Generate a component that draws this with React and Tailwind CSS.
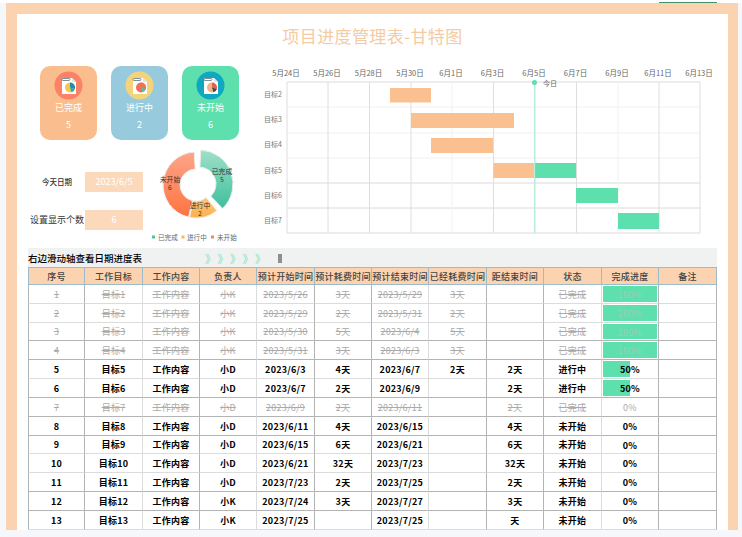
const font = "font-['Noto_Sans_CJK_SC','Liberation_Sans',sans-serif]";

// 表格数据
const rows = [
  ["1", "目标1", "工作内容", "小K", "2023/5/26", "3天", "2023/5/29", "3天", "", "已完成", 100, "done"],
  ["2", "目标2", "工作内容", "小K", "2023/5/29", "2天", "2023/5/31", "2天", "", "已完成", 100, "done"],
  ["3", "目标3", "工作内容", "小K", "2023/5/30", "5天", "2023/6/4", "5天", "", "已完成", 100, "done"],
  ["4", "目标4", "工作内容", "小K", "2023/5/31", "3天", "2023/6/3", "3天", "", "已完成", 100, "done"],
  ["5", "目标5", "工作内容", "小D", "2023/6/3", "4天", "2023/6/7", "2天", "2天", "进行中", 50, "live"],
  ["6", "目标6", "工作内容", "小D", "2023/6/7", "2天", "2023/6/9", "", "2天", "进行中", 50, "live"],
  ["7", "目标7", "工作内容", "小D", "2023/6/9", "2天", "2023/6/11", "", "2天", "已完成", 0, "done"],
  ["8", "目标8", "工作内容", "小D", "2023/6/11", "4天", "2023/6/15", "", "4天", "未开始", 0, "live"],
  ["9", "目标9", "工作内容", "小D", "2023/6/15", "6天", "2023/6/21", "", "6天", "未开始", 0, "live"],
  ["10", "目标10", "工作内容", "小D", "2023/6/21", "32天", "2023/7/23", "", "32天", "未开始", 0, "live"],
  ["11", "目标11", "工作内容", "小D", "2023/7/23", "2天", "2023/7/25", "", "2天", "未开始", 0, "live"],
  ["12", "目标12", "工作内容", "小K", "2023/7/24", "3天", "2023/7/27", "", "3天", "未开始", 0, "live"],
  ["13", "目标13", "工作内容", "小K", "2023/7/25", "", "2023/7/25", "", "天", "未开始", 0, "live"],
];

const headers = ["序号", "工作目标", "工作内容", "负责人", "预计开始时间", "预计耗费时间", "预计结束时间", "已经耗费时间", "距结束时间", "状态", "完成进度", "备注"];
const colWidths = ["w-[57px]", "w-[58px]", "w-[57px]", "w-[57px]", "w-[58px]", "w-[57px]", "w-[57px]", "w-[58px]", "w-[57px]", "w-[58px]", "w-[57px]", "w-[58px]"];

// 竖线和横线深浅不一
const colLine = ["border-r-[#b4b4b4]", "border-r-[#dcdcdc]", "border-r-[#b4b4b4]", "border-r-[#dcdcdc]", "border-r-[#b4b4b4]", "border-r-[#b4b4b4]", "border-r-[#dcdcdc]", "border-r-[#b4b4b4]", "border-r-[#b4b4b4]", "border-r-[#dcdcdc]", "border-r-[#b4b4b4]", "border-r-[#b4b4b4]"];
const rowLine = ["border-b-[#dcdcdc]", "border-b-[#dcdcdc]", "border-b-[#b4b4b4]", "border-b-[#b4b4b4]", "border-b-[#dcdcdc]", "border-b-[#b4b4b4]", "border-b-[#b4b4b4]", "border-b-[#b4b4b4]", "border-b-[#dcdcdc]", "border-b-[#dcdcdc]", "border-b-[#b4b4b4]", "border-b-[#b4b4b4]", "border-b-[#dcdcdc]"];
const rowHeight = ["h-[19px]", "h-[19px]", "h-[18px]", "h-[19px]", "h-[19px]", "h-[19px]", "h-[19px]", "h-[19px]", "h-[18px]", "h-[19px]", "h-[19px]", "h-[19px]", "h-[19px]"];

const ticks = ["5月24日", "5月26日", "5月28日", "5月30日", "6月1日", "6月3日", "6月5日", "6月7日", "6月9日", "6月11日", "6月13日"];
const tickX = [287, 328, 369.5, 411, 452, 493.5, 535, 576.5, 618, 659, 700];
const laneY = [82, 107, 133, 158, 183, 208, 233];
const laneNames = ["目标2", "目标3", "目标4", "目标5", "目标6", "目标7"];
const bars = [
  [390, 88, 41, 14.5, "#fbc08f"],
  [411, 113, 103, 15, "#fbc08f"],
  [431, 138, 62, 15, "#fbc08f"],
  [493.5, 163, 41, 15, "#fbc08f"],
  [534.5, 163, 41.5, 15, "#5ddfae"],
  [576, 188, 42, 15, "#5ddfae"],
  [618, 213, 41, 16, "#5ddfae"],
];

function GanttChart() {
  return (
    <svg className="w-[450px] h-[190px] shrink-0" viewBox="262 58 450 190">
      {laneY.map((y, i) => (
        <line key={y} x1="287" x2="700" y1={y} y2={y} stroke={i >= 4 || i === 0 ? "#dadada" : "#f0f0f0"} strokeWidth="1" />
      ))}
      {tickX.map((x, i) => (
        <line key={x} x1={x} x2={x} y1="82" y2="233" stroke={i === 4 || i === 8 ? "#f2f2f2" : "#dedede"} strokeWidth="1" />
      ))}
      {ticks.map((t, i) => (
        <text key={t} x={tickX[i] - 1} y="76" textAnchor="middle" fontSize="7.5" fill="#666" fontFamily="Noto Sans CJK SC">{t}</text>
      ))}
      {laneNames.map((n, i) => (
        <text key={n} x="282" y={97 + i * 25.2} textAnchor="end" fontSize="7" fill="#777" fontFamily="Noto Sans CJK SC">{n}</text>
      ))}
      {bars.map((b, i) => (
        <rect key={i} x={b[0]} y={b[1]} width={b[2]} height={b[3]} fill={b[4]} />
      ))}
      <line x1="534.5" x2="534.5" y1="82" y2="233" stroke="#bdeedb" strokeWidth="1.2" />
      <circle cx="534.5" cy="82.5" r="2.5" fill="#5ddfae" />
      <text x="543" y="85.5" fontSize="7" fill="#666" fontFamily="Noto Sans CJK SC">今日</text>
    </svg>
  );
}

// 圆环扇区路径
function slice(cx, cy, R, r, a0, a1) {
  const p = (rad, a) => {
    const t = ((a - 90) * Math.PI) / 180;
    return `${(cx + rad * Math.cos(t)).toFixed(2)} ${(cy + rad * Math.sin(t)).toFixed(2)}`;
  };
  const big = a1 - a0 > 180 ? 1 : 0;
  return `M${p(R, a0)} A${R} ${R} 0 ${big} 1 ${p(R, a1)} L${p(r, a1)} A${r} ${r} 0 ${big} 0 ${p(r, a0)} Z`;
}

function DonutChart() {
  return (
    <svg className="w-[92px] h-[100px] shrink-0" viewBox="150 148 92 100">
      <defs>
        <linearGradient id="g1" x1="0" x2="0" y1="0" y2="1">
          <stop offset="0" stopColor="#9fe0c9" />
          <stop offset="1" stopColor="#3fbf9d" />
        </linearGradient>
        <linearGradient id="g2" x1="0" x2="0" y1="0" y2="1">
          <stop offset="0" stopColor="#fbc777" />
          <stop offset="1" stopColor="#fbb04f" />
        </linearGradient>
        <linearGradient id="g3" x1="0" x2="0" y1="0" y2="1">
          <stop offset="0" stopColor="#fda58a" />
          <stop offset="1" stopColor="#fd7440" />
        </linearGradient>
      </defs>
      <path d={slice(199, 184, 34, 17, 3, 136)} fill="url(#g1)" stroke="#e9eeec" strokeWidth="1" />
      <path d={slice(196, 185, 33, 16, 141, 191)} fill="url(#g2)" stroke="#eeeeee" strokeWidth="1" />
      <path d={slice(196, 185, 33, 16, 193, 357)} fill="url(#g3)" stroke="#eeeeee" strokeWidth="1" />
      <g fontSize="6.8" fill="#333" textAnchor="middle" fontFamily="Noto Sans CJK SC">
        <text x="222" y="173.5">已完成</text>
        <text x="222" y="182">5</text>
        <text x="200" y="207.5">进行中</text>
        <text x="200" y="216">2</text>
        <text x="170" y="181.5">未开始</text>
        <text x="170" y="190">6</text>
      </g>
      <g fontSize="6.6" fill="#666" fontFamily="Noto Sans CJK SC">
        <rect x="152" y="235.5" width="3" height="3" fill="#4fc3a1" />
        <text x="158" y="240">已完成</text>
        <rect x="181.5" y="235.5" width="3" height="3" fill="#fbb861" />
        <text x="187" y="240">进行中</text>
        <rect x="211" y="235.5" width="3" height="3" fill="#f08a5d" />
        <text x="217" y="240">未开始</text>
      </g>
    </svg>
  );
}

function DocIcon({ bg, a, b, c }) {
  return (
    <svg className="w-[29px] h-[29px]" viewBox="0 0 29 29">
      <circle cx="14.5" cy="14.5" r="14" fill={bg} />
      <path d="M8 7h10l4 4v12H8z" fill="#fff" />
      <path d="M18 7v4h4z" fill="#dfe6ea" />
      <rect x="8" y="7.5" width="8" height="2" rx="1" fill="none" stroke="#5d7480" strokeWidth="0.8" />
      <circle cx="16" cy="16.5" r="5" fill={a} />
      <path d="M16 16.5V11.5a5 5 0 0 1 4.8 6.4z" fill={b} />
      <path d="M16 16.5l4.8 1.4a5 5 0 0 1-3.3 3.4z" fill={c} />
    </svg>
  );
}

function StatCard({ bg, label, count, icon }) {
  return (
    <div className={`w-[57px] h-[74px] rounded-[10px] flex flex-col items-center pt-[5px] ${bg}`}>
      {icon}
      <div className="mt-px text-[9px] leading-[14px] text-white">{label}</div>
      <div className="mt-[3px] text-[9px] leading-[14px] text-white">{count}</div>
    </div>
  );
}

function ProgressCell({ pct, muted, struck, line }) {
  return (
    <td
      className={`p-px border-r border-b text-center bg-no-repeat bg-clip-content bg-origin-content bg-[linear-gradient(#5ddfae,#5ddfae)] ${line} ${muted ? (pct === 0 ? "text-[#aaaaaa] font-normal" : "text-[#9ccfb9] font-normal") : "text-black font-semibold"} ${struck ? "line-through" : ""}`}
      style={{ backgroundSize: `${pct}% 100%` }}
    >
      <span className="inline-block translate-y-px">{pct}%</span>
    </td>
  );
}

export default function App() {
  return (
    <div className={`w-[742px] h-[537px] overflow-hidden bg-[#f5f7fa] ${font}`}>
      <div className="h-[3px] bg-white flex">
        <div className="ml-[659px] mt-[2px] w-[58px] h-px bg-[#3f8f6a]" />
      </div>
      <div className="ml-[6px] w-[732px] h-[527px] border-t-[11px] border-x-[11px] border-r-[10px] border-[#fbd3b0] bg-white">
        <h1 className="h-[44px] flex items-center justify-center text-[17px] font-normal tracking-[0.4px] text-[#f5cba3]">项目进度管理表-甘特图</h1>

        <div className="flex h-[190px]">
          <div className="w-[245px] shrink-0">
            <div className="flex gap-[14px] pl-[23px] pt-[8px]">
              <StatCard bg="bg-[#fabd8e]" label="已完成" count="5" icon={<DocIcon bg="#fb8167" a="#f6c453" b="#1d8fa8" c="#2aa7b8" />} />
              <StatCard bg="bg-[#97cadd]" label="进行中" count="2" icon={<DocIcon bg="#f3d37c" a="#f0715a" b="#f0715a" c="#5fbf8f" />} />
              <StatCard bg="bg-[#5de0ad]" label="未开始" count="6" icon={<DocIcon bg="#0fa8c0" a="#f2b28a" b="#e8604c" c="#3c4a55" />} />
            </div>
            <div className="flex mt-[8px]">
              <div className="w-[133px] shrink-0 pt-[24px] flex flex-col gap-[18px]">
                <div className="flex items-center h-[20px]">
                  <div className="w-[68px] text-center pl-[12px] text-[7.5px] font-medium text-[#333]">今天日期</div>
                  <div className="w-[58px] h-[20px] bg-[#fcd9bb] text-white text-[9px] flex items-center justify-center">2023/6/5</div>
                </div>
                <div className="flex items-center h-[20px]">
                  <div className="w-[68px] text-right pr-px text-[9px] text-[#333] whitespace-nowrap">设置显示个数</div>
                  <div className="w-[58px] h-[20px] bg-[#fcd9bb] text-white text-[9px] flex items-center justify-center">6</div>
                </div>
              </div>
              <DonutChart />
            </div>
          </div>
          <GanttChart />
        </div>

        <div className="ml-[11px] w-[689px] h-[19px] bg-[#f0f1f1] flex items-end pb-[1px]">
          <div className="w-[177px] shrink-0 text-[9.5px] leading-[15px] font-medium text-black whitespace-nowrap">右边滑动轴查看日期进度表</div>
          <div className="flex w-[65px] shrink-0 text-[11px] leading-[15px] text-[#7fe3c0]">
            <span className="w-[12.5px]">》</span>
            <span className="w-[12.5px]">》</span>
            <span className="w-[12.5px]">》</span>
            <span className="w-[12.5px]">》</span>
            <span className="w-[12.5px]">》</span>
          </div>
          <div className="ml-[8px] mb-[3px] w-[4px] h-[9px] bg-[#8f8f8f]" />
        </div>

        <table className="ml-[11px] w-[689px] table-fixed border-separate border-spacing-0 text-[9px] tracking-[0.25px]">
          <colgroup>
            {colWidths.map((w, i) => (
              <col key={i} className={w} />
            ))}
          </colgroup>
          <thead>
            <tr className="h-[18px] bg-[#fbd3b0]">
              {headers.map((h, i) => (
                <th key={h} className={`p-0 pt-px font-medium text-[#444] whitespace-nowrap border-t border-b border-r border-[#9dbccb] ${i === 0 ? "border-l" : ""}`}>{h}</th>
              ))}
            </tr>
          </thead>
          <tbody>
            {rows.map((r, ri) => {
              const muted = r[11] === "done";
              const struck = muted;
              return (
                <tr key={r[0]} className={rowHeight[ri]}>
                  {r.slice(0, 10).map((v, ci) => (
                    <td
                      key={ci}
                      className={`p-0 pt-px text-center whitespace-nowrap border-r border-b ${rowLine[ri]} ${colLine[ci]} ${ci === 0 ? "border-l border-l-[#b4b4b4]" : ""} ${muted ? "text-[#aaaaaa] font-normal line-through" : "text-black font-semibold"}`}
                    >
                      {v}
                    </td>
                  ))}
                  <ProgressCell pct={r[10]} muted={muted} struck={struck} line={`${rowLine[ri]} ${colLine[10]}`} />
                  <td className={`p-0 border-r border-b ${rowLine[ri]} ${colLine[11]}`} />
                </tr>
              );
            })}
          </tbody>
        </table>
      </div>
    </div>
  );
}
